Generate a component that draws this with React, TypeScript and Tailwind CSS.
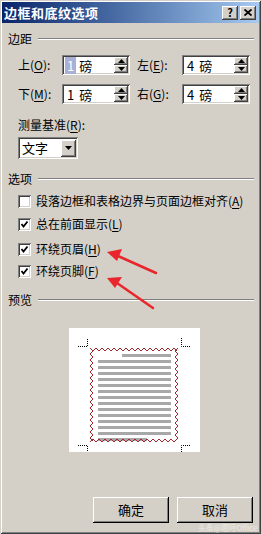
import React from "react";

const FONT = { fontFamily: '"Noto Sans CJK SC", "Liberation Sans", sans-serif' };

const raised =
  "shadow-[inset_-1px_-1px_0_#404040,inset_1px_1px_0_#ffffff,inset_-2px_-2px_0_#808080,inset_2px_2px_0_#d4d0c8]";
const sunken =
  "shadow-[inset_1px_1px_0_#808080,inset_-1px_-1px_0_#ffffff,inset_2px_2px_0_#404040,inset_-2px_-2px_0_#d4d0c8]";

function Key({ label, k }: { label: string; k: string }) {
  return (
    <span>
      {label}(<span className="underline underline-offset-2">{k}</span>)
    </span>
  );
}

function GroupHeader({ title, className }: { title: string; className?: string }) {
  return (
    <div className={`flex items-center h-[14px] ${className ?? ""}`}>
      <span className="text-[12px] leading-none">{title}</span>
      <div className="flex-1 ml-[6px] mr-[5px] h-[2px] border-t border-t-[#808080] border-b border-b-white" />
    </div>
  );
}

function Spinner() {
  return (
    <div className="flex flex-col w-[14px] h-[16px] mr-[2px]">
      <div className={`flex-1 bg-[#d4d0c8] flex items-center justify-center ${raised}`}>
        <svg width="7" height="4" viewBox="0 0 7 4">
          <path d="M3.5 0 L7 4 L0 4 Z" fill="#000" />
        </svg>
      </div>
      <div className={`flex-1 bg-[#d4d0c8] flex items-center justify-center ${raised}`}>
        <svg width="7" height="4" viewBox="0 0 7 4">
          <path d="M0 0 L7 0 L3.5 4 Z" fill="#000" />
        </svg>
      </div>
    </div>
  );
}

function SpinInput({ value, selected }: { value: string; selected?: boolean }) {
  return (
    <div className={`w-[68px] h-[20px] bg-white flex items-center justify-between ${sunken}`}>
      <span className="pl-[3px] text-[13px] leading-none flex items-center">
        <span className={selected ? "bg-[#a8b0d6] text-white px-[2px] py-[2px]" : "px-[2px] py-[2px]"}>
          {value.split(" ")[0]}
        </span>
        <span className="ml-[3px]">{value.split(" ")[1]}</span>
      </span>
      <Spinner />
    </div>
  );
}

function Checkbox({ checked }: { checked: boolean }) {
  return (
    <div className={`w-[13px] h-[13px] bg-white flex items-center justify-center ${sunken}`}>
      {checked && (
        <svg width="9" height="9" viewBox="0 0 9 9">
          <path d="M1.5 4 L3.5 6.5 L7.5 1.5" stroke="#000" strokeWidth="1.8" fill="none" />
        </svg>
      )}
    </div>
  );
}

function zigH(x1: number, x2: number, y: number, dir: number) {
  const pts: string[] = [];
  let i = 0;
  for (let x = x1; x <= x2; x += 3, i++) pts.push(`${x},${y + (i % 2 ? dir * 3 : 0)}`);
  return pts.join(" ");
}
function zigV(y1: number, y2: number, x: number, dir: number) {
  const pts: string[] = [];
  let i = 0;
  for (let y = y1; y <= y2; y += 3, i++) pts.push(`${x + (i % 2 ? dir * 3 : 0)},${y}`);
  return pts.join(" ");
}

function Preview() {
  const lines = Array.from({ length: 15 }, (_, i) => i);
  return (
    <div className="w-[131px] h-[124px] bg-white ml-[61px]">
      <svg width="131" height="124" viewBox="0 0 131 124">
        {lines.map((i) => (
          <rect
            key={i}
            x={i === 0 ? 53 : 29}
            y={26 + i * 6}
            width={i === 0 ? 49 : i === 14 ? 49 : 73}
            height="3"
            fill="#a8a8a8"
          />
        ))}
        <g stroke="#a3262a" strokeWidth="1" fill="none">
          <polyline points={zigH(21, 110, 20, 1)} />
          <polyline points={zigH(21, 110, 114, -1)} />
          <polyline points={zigV(20, 114, 21, 1)} />
          <polyline points={zigV(20, 114, 109, -1)} />
        </g>
        <g stroke="#000" strokeWidth="1" fill="none" strokeDasharray="1 1">
          <path d="M9 18.5 H18.5 V10" />
          <path d="M121 18.5 H112.5 V10" />
          <path d="M9 117.5 H18.5 V124" />
          <path d="M121 117.5 H112.5 V124" />
        </g>
      </svg>
    </div>
  );
}

function Button({ children }: { children: React.ReactNode }) {
  return (
    <div className="w-[76px] h-[26px] bg-[#d4d0c8] flex items-center justify-center text-[13px] shadow-[inset_-1px_-1px_0_#000,inset_1px_1px_0_#ffffff,inset_-2px_-2px_0_#808080,inset_2px_2px_0_#d4d0c8]">
      {children}
    </div>
  );
}

export default function App() {
  return (
    <div
      className="relative w-[261px] h-[534px] bg-[#d4d0c8] p-[2px] flex flex-col text-black shadow-[inset_1px_1px_0_#d4d0c8,inset_-1px_-1px_0_#404040,inset_2px_2px_0_#ffffff,inset_-2px_-2px_0_#808080]"
      style={FONT}
    >
      {/* title bar */}
      <div className="h-[21px] flex items-center justify-between bg-gradient-to-r from-[#0a246a] to-[#a6caf0]">
        <span className="pl-[2px] text-white font-bold text-[13px] tracking-[0.5px]">边框和底纹选项</span>
        <div className="flex gap-[2px] pr-[3px]">
          <div className={`w-[16px] h-[14px] bg-[#d4d0c8] flex items-center justify-center text-[11px] font-bold leading-none ${raised}`}>
            ?
          </div>
          <div className={`w-[16px] h-[14px] bg-[#d4d0c8] flex items-center justify-center ${raised}`}>
            <svg width="8" height="7" viewBox="0 0 8 7">
              <path d="M0.5 0.5 L7.5 6.5 M7.5 0.5 L0.5 6.5" stroke="#000" strokeWidth="1.8" />
            </svg>
          </div>
        </div>
      </div>

      <div className="flex-1 flex flex-col pl-[6px] text-[12px]">
        <GroupHeader title="边距" className="mt-[9px]" />

        <div className="flex items-center h-[20px] mt-[9px] pl-[10px]">
          <span className="w-[44px]"><Key label="上" k="O" />:</span>
          <SpinInput value="1 磅" selected />
          <span className="w-[45px] ml-[7px]"><Key label="左" k="E" />:</span>
          <SpinInput value="4 磅" />
        </div>
        <div className="flex items-center h-[20px] mt-[9px] pl-[10px]">
          <span className="w-[44px]"><Key label="下" k="M" />:</span>
          <SpinInput value="1 磅" />
          <span className="w-[45px] ml-[7px]"><Key label="右" k="G" />:</span>
          <SpinInput value="4 磅" />
        </div>

        <div className="h-[14px] mt-[14px] pl-[10px] flex items-center">
          <Key label="测量基准" k="R" />:
        </div>
        <div className={`ml-[10px] mt-[5px] w-[60px] h-[22px] bg-white flex items-center justify-between ${sunken}`}>
          <span className="pl-[4px] text-[13px]">文字</span>
          <div className={`w-[15px] h-[17px] mr-[2px] bg-[#d4d0c8] flex items-center justify-center ${raised}`}>
            <svg width="7" height="4" viewBox="0 0 7 4">
              <path d="M0 0 L7 0 L3.5 4 Z" fill="#000" />
            </svg>
          </div>
        </div>

        <GroupHeader title="选项" className="mt-[13px]" />

        <div className="flex items-center gap-[5px] h-[16px] mt-[7px] pl-[10px]">
          <Checkbox checked={false} />
          <span>段落边框和表格边界与页面边框对齐(<span className="underline underline-offset-2">A</span>)</span>
        </div>
        <div className="flex items-center gap-[5px] h-[16px] mt-[7px] pl-[10px]">
          <Checkbox checked />
          <Key label="总在前面显示" k="L" />
        </div>
        <div className="flex items-center gap-[5px] h-[16px] mt-[9px] pl-[10px]">
          <Checkbox checked />
          <Key label="环绕页眉" k="H" />
        </div>
        <div className="flex items-center gap-[5px] h-[16px] mt-[6px] pl-[10px]">
          <Checkbox checked />
          <Key label="环绕页脚" k="F" />
        </div>

        <GroupHeader title="预览" className="mt-[14px]" />

        <div className="mt-[21px]">
          <Preview />
        </div>

        <div className="mt-auto mb-[9px] flex justify-end gap-[8px] pr-[6px]">
          <Button>确定</Button>
          <Button>取消</Button>
        </div>
      </div>

      {/* red annotation arrows */}
      <svg className="absolute left-0 top-0 pointer-events-none" width="261" height="534" viewBox="0 0 261 534">
        <g stroke="#e8262b" strokeWidth="2.5" fill="#e8262b" strokeLinecap="round">
          <line x1="156" y1="273" x2="118" y2="256" />
          <path d="M107 252 L122 249 L117 261 Z" stroke="none" />
          <line x1="153" y1="308" x2="117" y2="283" />
          <path d="M107 278 L122 277 L115 288 Z" stroke="none" />
        </g>
      </svg>

      {/* faint watermark */}
      <span className="absolute right-[4px] bottom-[2px] text-[8px] leading-none text-[#eceae4] tracking-tight">
        头条@嗯哼Office
      </span>
    </div>
  );
}
